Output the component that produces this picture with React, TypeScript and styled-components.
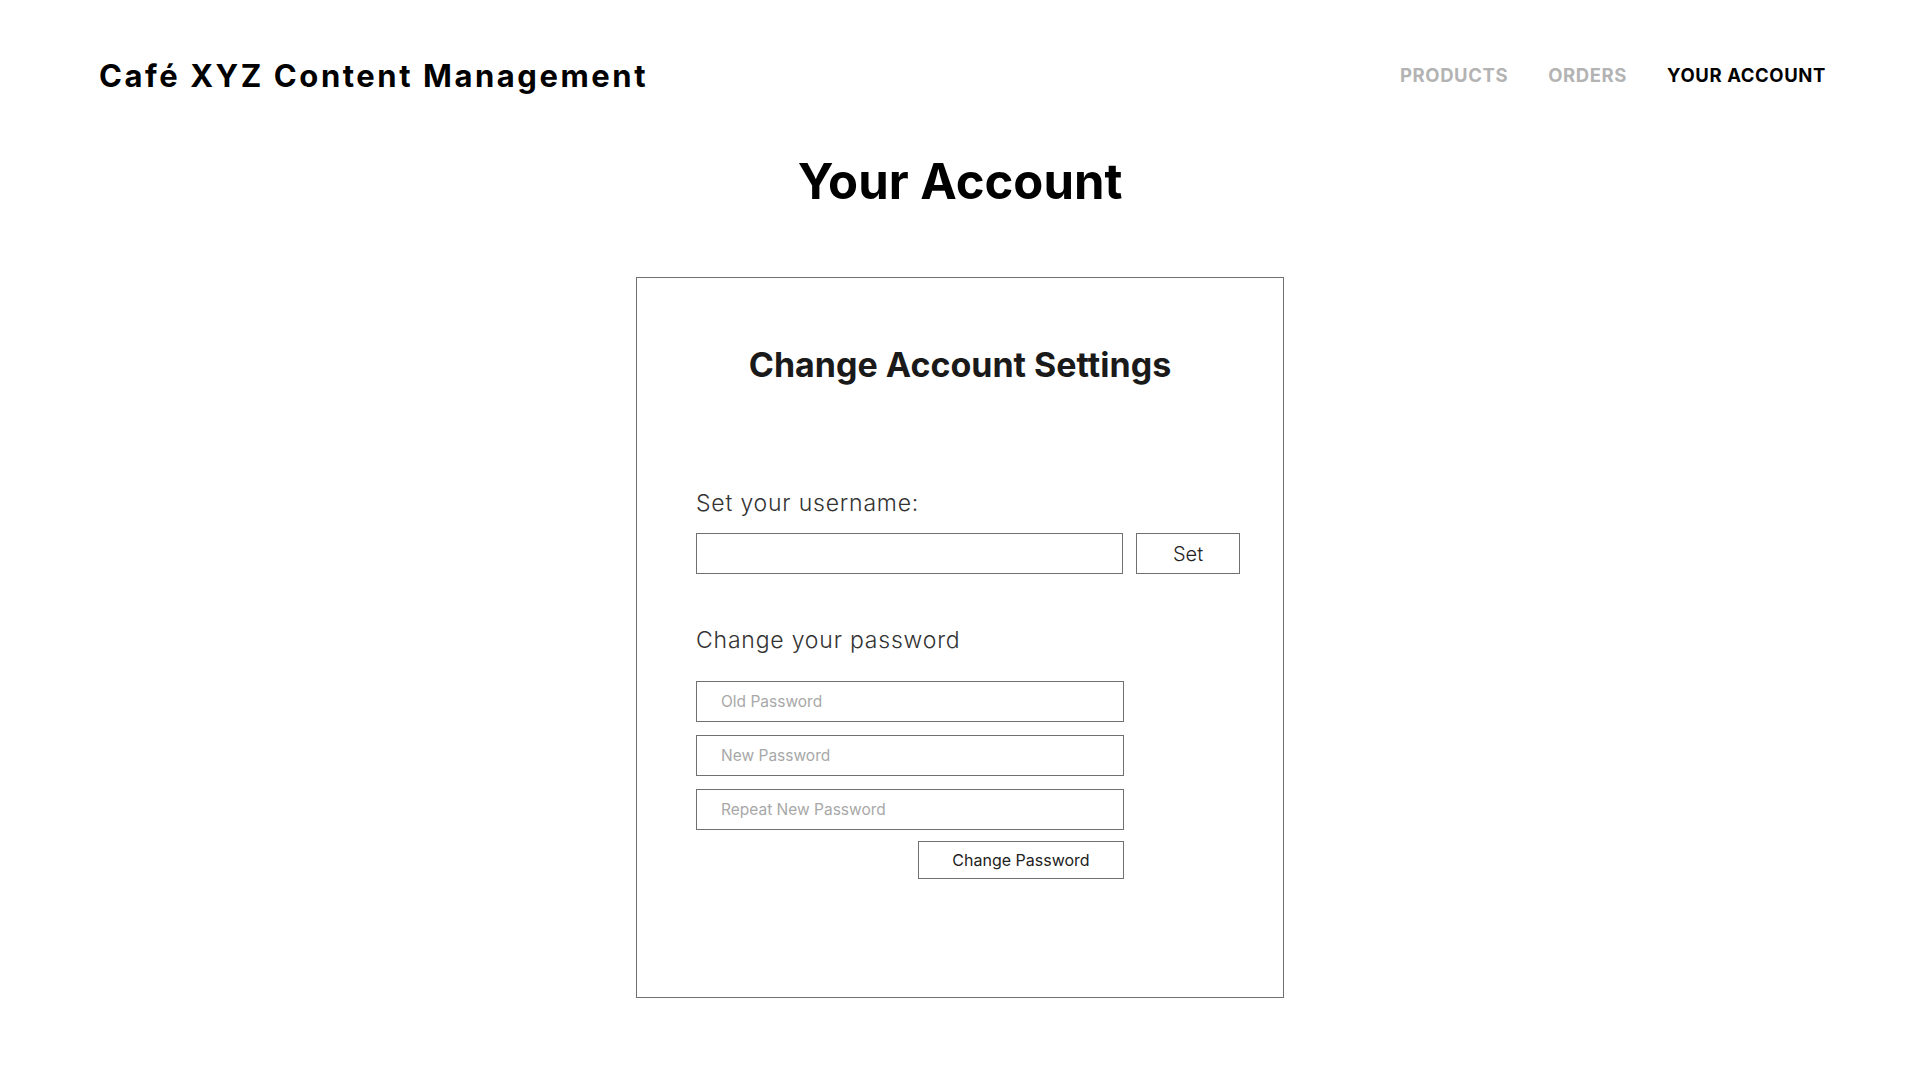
import styled, { createGlobalStyle } from "styled-components"

const GlobalStyle = createGlobalStyle`
    * { box-sizing: border-box; }
    body {
        margin: 0;
        background: #ffffff;
        font-family: "Inter", "Lato", sans-serif;
        color: #000;
    }
`

const Page = styled.div`
    display: flex;
    flex-direction: column;
    min-height: 1080px;
`

const Header = styled.header`
    display: flex;
    justify-content: space-between;
    align-items: center;
    padding: 52px 94px 0 99px;
`

const Brand = styled.h1`
    margin: 0;
    font-size: 31px;
    font-weight: 700;
    letter-spacing: 2.55px;
    line-height: 48px;
`

const Nav = styled.nav`
    display: flex;
    gap: 40px;
    margin-top: -2px;
`

const NavLink = styled.a<{ $active?: boolean }>`
    font-size: 18.5px;
    font-weight: 700;
    letter-spacing: 0.6px;
    text-decoration: none;
    color: ${(p) => (p.$active ? "#000" : "#b3b3b3")};
    cursor: pointer;
`

const Title = styled.h2`
    margin: 54px 0 0;
    text-align: center;
    font-size: 49px;
    font-weight: 700;
    line-height: 55px;
`

const Card = styled.section`
    width: 648px;
    height: 721px;
    margin: 68px auto 0;
    border: 1px solid #707070;
    display: flex;
    flex-direction: column;
`

const CardTitle = styled.h3`
    margin: 66px 0 0;
    text-align: center;
    font-size: 34px;
    font-weight: 700;
    line-height: 41px;
    color: #1a1a1a;
`

const Form = styled.div`
    display: flex;
    flex-direction: column;
    padding: 0 43px 0 59px;
`

const Label = styled.label<{ $top: number }>`
    margin-top: ${(p) => p.$top}px;
    font-size: 23px;
    font-weight: 300;
    letter-spacing: 0.8px;
    line-height: 28px;
    color: #333;
`

const Row = styled.div`
    display: flex;
    gap: 13px;
    margin-top: 16px;
`

const Stack = styled.div`
    display: flex;
    flex-direction: column;
    gap: 13px;
    width: 428px;
    margin-top: 27px;
`

const Field = styled.input`
    width: 428px;
    height: 41px;
    border: 1px solid #707070;
    border-radius: 0;
    padding: 0 24px;
    font-family: inherit;
    font-size: 15.5px;
    color: #333;
    outline: none;
    &::placeholder {
        color: #a8a8a8;
    }
`

const Button = styled.button<{ $w: number; $h: number }>`
    width: ${(p) => p.$w}px;
    height: ${(p) => p.$h}px;
    background: #fff;
    border: 1px solid #707070;
    border-radius: 0;
    font-family: inherit;
    font-size: ${(p) => (p.$h > 40 ? 20 : 16)}px;
    font-weight: ${(p) => (p.$h > 40 ? 300 : 400)};
    color: #222;
    cursor: pointer;
`

const ButtonRow = styled.div`
    display: flex;
    justify-content: flex-end;
    width: 428px;
    margin-top: 11px;
`

const App = () => {
    return (
        <Page>
            <GlobalStyle />
            <Header>
                <Brand>Café XYZ Content Management</Brand>
                <Nav>
                    <NavLink>PRODUCTS</NavLink>
                    <NavLink>ORDERS</NavLink>
                    <NavLink $active>YOUR ACCOUNT</NavLink>
                </Nav>
            </Header>
            <Title>Your Account</Title>
            <Card>
                <CardTitle>Change Account Settings</CardTitle>
                <Form>
                    <Label $top={104}>Set your username:</Label>
                    <Row>
                        <Field type="text" />
                        <Button $w={104} $h={41}>Set</Button>
                    </Row>
                    <Label $top={52}>Change your password</Label>
                    <Stack>
                        <Field type="password" placeholder="Old Password" />
                        <Field type="password" placeholder="New Password" />
                        <Field type="password" placeholder="Repeat New Password" />
                    </Stack>
                    <ButtonRow>
                        <Button $w={206} $h={38}>Change Password</Button>
                    </ButtonRow>
                </Form>
            </Card>
        </Page>
    )
}

export default App
